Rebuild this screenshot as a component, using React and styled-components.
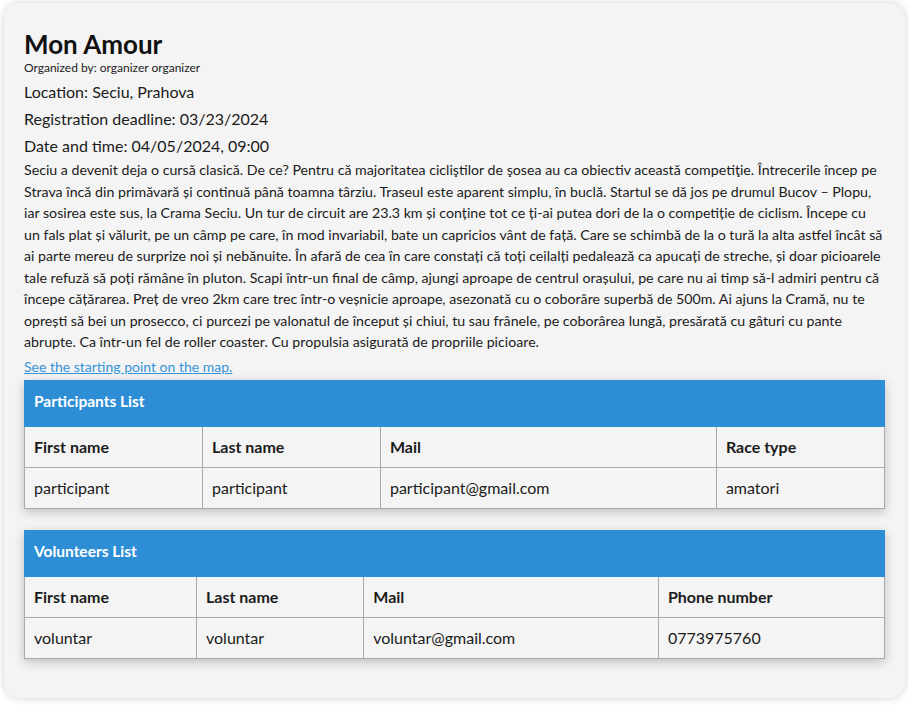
import React from "react";
import styled, { createGlobalStyle } from "styled-components";

const Global = createGlobalStyle`
  html, body { margin: 0; padding: 0; background: #ffffff; }
  body { font-family: "Lato", "Noto Sans", sans-serif; color: #1b1b1b; }
  * { box-sizing: border-box; }
`;

const Page = styled.div`
  padding: 3px 4px 10px 4px;
`;

const Card = styled.div`
  background: #f4f4f4;
  border-radius: 16px;
  box-shadow: 0 0 8px rgba(0, 0, 0, 0.18);
  padding: 26px 20px 39px 20px;
  display: flex;
  flex-direction: column;
`;

const Title = styled.h1`
  margin: 0;
  font-size: 26px;
  font-weight: 700;
  line-height: 30px;
  color: #111;
`;

const Organizer = styled.div`
  font-size: 12px;
  line-height: 14px;
  margin-top: 2px;
  color: #222;
`;

const Info = styled.p`
  margin: 0;
  margin-top: ${(p) => p.$gap || 6}px;
  font-size: 16px;
  line-height: 21px;
  color: #1b1b1b;
`;

const Description = styled.p`
  margin: 3px 0 0 0;
  font-size: 14.2px;
  line-height: 21.5px;
  color: #1b1b1b;
`;

const MapLink = styled.a`
  font-size: 14px;
  line-height: 18px;
  margin-top: 5px;
  color: #3593d9;
  text-decoration: underline;
  align-self: flex-start;
`;

const Panel = styled.section`
  margin-top: ${(p) => p.$top}px;
  box-shadow: 0 3px 10px rgba(0, 0, 0, 0.22);
  background: #f4f4f4;
`;

const PanelHeader = styled.div`
  background: #2d8ed5;
  color: #ffffff;
  font-weight: 700;
  font-size: 15.5px;
  line-height: 19px;
  padding: 12px 10px 16px 10px;
`;

const Table = styled.table`
  width: 100%;
  border-collapse: collapse;
  font-size: 16px;
`;

const Th = styled.th`
  text-align: left;
  font-weight: 700;
  padding: 10px 9px 10px 9px;
  line-height: 20px;
  border: 1px solid #aaaaaa;
  border-top: none;
  color: #1b1b1b;
`;

const Td = styled.td`
  padding: 10px 9px 10px 9px;
  line-height: 20px;
  border: 1px solid #aaaaaa;
  color: #1b1b1b;
`;

function ListPanel({ title, columns, rows, top }) {
  return (
    <Panel $top={top}>
      <PanelHeader>{title}</PanelHeader>
      <Table>
        <thead>
          <tr>
            {columns.map((c) => (
              <Th key={c}>{c}</Th>
            ))}
          </tr>
        </thead>
        <tbody>
          {rows.map((r, i) => (
            <tr key={i}>
              {r.map((v, j) => (
                <Td key={j}>{v}</Td>
              ))}
            </tr>
          ))}
        </tbody>
      </Table>
    </Panel>
  );
}

const text =
  "Seciu a devenit deja o cursă clasică. De ce? Pentru că majoritatea cicliştilor de şosea au ca obiectiv această competiţie. Întrecerile încep pe Strava încă din primăvară și continuă până toamna târziu. Traseul este aparent simplu, în buclă. Startul se dă jos pe drumul Bucov – Plopu, iar sosirea este sus, la Crama Seciu. Un tur de circuit are 23.3 km și conține tot ce ți-ai putea dori de la o competiție de ciclism. Începe cu un fals plat și vălurit, pe un câmp pe care, în mod invariabil, bate un capricios vânt de față. Care se schimbă de la o tură la alta astfel încât să ai parte mereu de surprize noi și nebănuite. În afară de cea în care constați că toți ceilalți pedalează ca apucați de streche, și doar picioarele tale refuză să poți rămâne în pluton. Scapi într-un final de câmp, ajungi aproape de centrul orașului, pe care nu ai timp să-l admiri pentru că începe cățărarea. Preț de vreo 2km care trec într-o veșnicie aproape, asezonată cu o coborâre superbă de 500m. Ai ajuns la Cramă, nu te oprești să bei un prosecco, ci purcezi pe valonatul de început și chiui, tu sau frânele, pe coborârea lungă, presărată cu gâturi cu pante abrupte. Ca într-un fel de roller coaster. Cu propulsia asigurată de propriile picioare.";

export default function App() {
  return (
    <Page>
      <Global />
      <Card>
        <Title>Mon Amour</Title>
        <Organizer>Organized by: organizer organizer</Organizer>
        <Info $gap={6}>Location: Seciu, Prahova</Info>
        <Info>Registration deadline: 03/23/2024</Info>
        <Info>Date and time: 04/05/2024, 09:00</Info>
        <Description>{text}</Description>
        <MapLink href="#">See the starting point on the map.</MapLink>
        <ListPanel
          top={4}
          title="Participants List"
          columns={["First name", "Last name", "Mail", "Race type"]}
          rows={[["participant", "participant", "participant@gmail.com", "amatori"]]}
        />
        <ListPanel
          top={21}
          title="Volunteers List"
          columns={["First name", "Last name", "Mail", "Phone number"]}
          rows={[["voluntar", "voluntar", "voluntar@gmail.com", "0773975760"]]}
        />
      </Card>
    </Page>
  );
}
